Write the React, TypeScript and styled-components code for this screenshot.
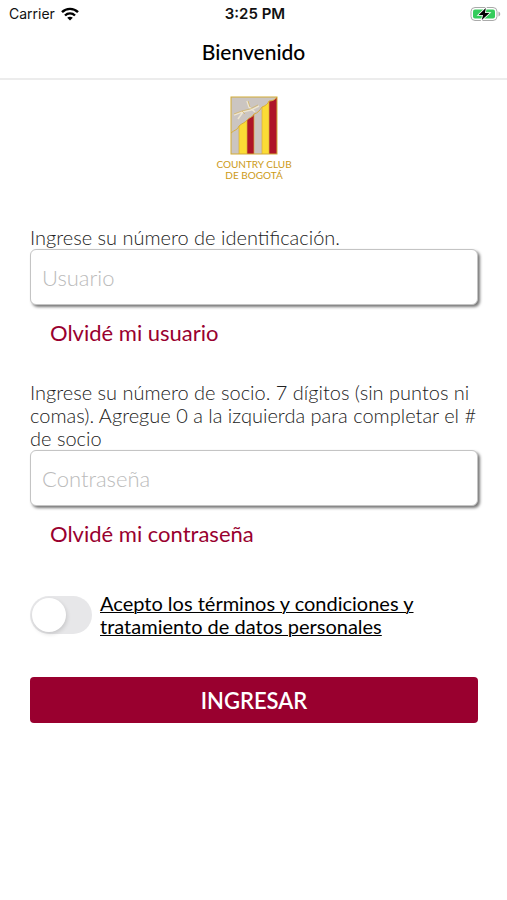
import React, { useState } from "react";
import styled, { createGlobalStyle } from "styled-components";

const GlobalStyle = createGlobalStyle`
  * { box-sizing: border-box; }
  body {
    margin: 0;
    background: #fff;
    color: #000;
    font-family: Lato, "Open Sans", sans-serif;
  }
`;

const Screen = styled.div`
  min-height: 100vh;
  background: #fff;
`;

const StatusBar = styled.div`
  display: grid;
  grid-template-columns: 1fr auto 1fr;
  align-items: center;
  height: 27px;
  padding: 0 6px 0 9px;
  font-family: Inter, "Liberation Sans", sans-serif;
  font-size: 14px;
  line-height: 20px;
  color: #111;
`;

const Carrier = styled.div`
  display: flex;
  align-items: center;
  gap: 6px;
`;

const Clock = styled.div`
  font-size: 15px;
  font-weight: 600;
`;

const BatterySlot = styled.div`
  display: flex;
  justify-content: flex-end;
`;

const Header = styled.header`
  display: flex;
  align-items: center;
  justify-content: center;
  height: 53px;
  padding-bottom: 2px;
  border-bottom: 2px solid #ececec;
`;

const Title = styled.h1`
  margin: 0;
  font-size: 21px;
  line-height: 24px;
  font-weight: 500;
`;

const LogoArea = styled.div`
  display: flex;
  justify-content: center;
  padding: 15px 0 43px;
`;

const Form = styled.form`
  display: flex;
  flex-direction: column;
  padding: 0 29px 0 30px;
`;

const Field = styled.div`
  display: flex;
  flex-direction: column;
  align-items: flex-start;
  margin-bottom: 36px;
`;

const Label = styled.label`
  font-size: 20px;
  line-height: 23px;
  font-weight: 300;
  color: #222;
`;

const TextInput = styled.input`
  width: 100%;
  height: 56px;
  padding: 0 11px;
  border: 1px solid #c4c4c4;
  border-radius: 6px;
  outline: none;
  background: #fff;
  box-shadow: 2px 2px 3px #777;
  font-family: inherit;
  font-size: 22px;
  font-weight: 300;
  color: #222;
  &::placeholder {
    color: #bbb;
    opacity: 1;
  }
`;

const RecoverLink = styled.a`
  margin: 16px 0 0 20px;
  font-size: 22px;
  line-height: 24px;
  color: #99002f;
  text-decoration: none;
`;

const TermsRow = styled.div`
  display: flex;
  align-items: center;
  gap: 8px;
  margin: 10px 0 39px;
`;

const Switch = styled.input`
  appearance: none;
  flex: none;
  display: flex;
  align-items: center;
  width: 62px;
  height: 38px;
  margin: 0;
  padding: 2px;
  border-radius: 19px;
  background: #e7e7e9;
  cursor: pointer;
  &::before {
    content: "";
    width: 34px;
    height: 34px;
    border-radius: 50%;
    background: #fff;
    box-shadow: 1px 2px 4px rgba(0, 0, 0, 0.14);
  }
  &:checked {
    justify-content: flex-end;
    background: #99002f;
  }
`;

const TermsLabel = styled.label`
  max-width: 330px;
  font-size: 20px;
  line-height: 23px;
  text-decoration: underline;
  text-decoration-thickness: 1px;
`;

const SubmitButton = styled.button`
  height: 46px;
  padding: 2px 0 0;
  border: 0;
  border-radius: 4px;
  background: #99002f;
  color: #fff;
  font-family: inherit;
  font-size: 22px;
  line-height: 26px;
  font-weight: 600;
  cursor: pointer;
`;

const WifiIcon = () => (
  <svg width="18" height="14" viewBox="0 0 18 14" fill="none" stroke="#000" strokeWidth="2.4" aria-hidden="true">
    <path d="M1 5.2C5.4 0.7 12.6 0.7 17 5.2" />
    <path d="M4 8.5C6.8 5.7 11.2 5.7 14 8.5" />
    <path d="M9 13.6L6.2 10.8C7.8 9.3 10.2 9.3 11.8 10.8Z" fill="#000" stroke="none" />
  </svg>
);

const BatteryIcon = () => (
  <svg width="31" height="16" viewBox="0 0 31 16" aria-hidden="true">
    <rect x="1" y="1.5" width="26" height="13" rx="4" fill="#fff" stroke="#aaa" />
    <rect x="3" y="3.5" width="22" height="9" rx="2" fill="#35cc5b" />
    <path d="M28.5 5.5C30.8 6.2 30.8 9.8 28.5 10.5Z" fill="#aaa" />
    <path d="M15.8 2L8.6 9H13L11.8 14L19.4 7H15Z" fill="#000" stroke="#fff" strokeWidth="1.6" paintOrder="stroke" />
  </svg>
);

const ClubLogo = () => (
  <svg width="80" height="88" viewBox="0 0 80 88" role="img" aria-label="Country Club de Bogotá">
    <defs>
      <clipPath id="stripes">
        <path d="M17 38C20 35 24 35 25 31C28 28 31 28 33 25C36 22 39 22 40 19C44 18 46 15 48 12C51 11 54 9 55 6C58 6 61 5 63 2V59H17Z" />
      </clipPath>
    </defs>
    <rect x="17" y="2" width="46" height="57" fill="#cbc5c1" />
    <g clipPath="url(#stripes)">
      <path d="M25 0H33V60H25Z M48 0H55V60H48Z" fill="#fbdc35" />
      <path d="M33 0H40V60H33Z M55 0H63V60H55Z" fill="#ae1428" />
      <path d="M25 0V60M33 0V60M40 0V60M48 0V60M55 0V60" stroke="#d8ad3b" strokeWidth="0.7" />
    </g>
    <path
      d="M17 38C20 35 24 35 25 31C28 28 31 28 33 25C36 22 39 22 40 19C44 18 46 15 48 12C51 11 54 9 55 6C58 6 61 5 63 2"
      fill="none"
      stroke="#d8ad3b"
    />
    <path d="M20 20L28 17L37 15L45 11M33 6L35 12L41 17M24 24L29 17" fill="none" stroke="#eee6d2" strokeWidth="1.5" />
    <path d="M20 19L28 16L36 14L44 10M34 6L36 12M28 16L31 19" fill="none" stroke="#d4ac4a" strokeWidth="0.6" />
    <rect x="17" y="2" width="46" height="57" fill="none" stroke="#d2ab36" />
    <g fill="#cc9a16" fontFamily="Lato, sans-serif" fontSize="10" textAnchor="middle">
      <text x="40" y="73">COUNTRY CLUB</text>
      <text x="40" y="84">DE BOGOTÁ</text>
    </g>
  </svg>
);

export default function App() {
  const [accepted, setAccepted] = useState(false);

  return (
    <Screen>
      <GlobalStyle />
      <StatusBar>
        <Carrier>
          Carrier
          <WifiIcon />
        </Carrier>
        <Clock>3:25 PM</Clock>
        <BatterySlot>
          <BatteryIcon />
        </BatterySlot>
      </StatusBar>
      <Header>
        <Title>Bienvenido</Title>
      </Header>
      <main>
        <LogoArea>
          <ClubLogo />
        </LogoArea>
        <Form onSubmit={(event) => event.preventDefault()}>
          <Field>
            <Label htmlFor="user">Ingrese su número de identificación.</Label>
            <TextInput id="user" type="text" placeholder="Usuario" autoComplete="username" />
            <RecoverLink href="#usuario">Olvidé mi usuario</RecoverLink>
          </Field>
          <Field>
            <Label htmlFor="password">
              Ingrese su número de socio. 7 dígitos (sin puntos ni comas). Agregue 0 a la izquierda para completar el # de
              socio
            </Label>
            <TextInput id="password" type="password" placeholder="Contraseña" autoComplete="current-password" />
            <RecoverLink href="#contrasena">Olvidé mi contraseña</RecoverLink>
          </Field>
          <TermsRow>
            <Switch
              id="terms"
              type="checkbox"
              role="switch"
              checked={accepted}
              onChange={(event) => setAccepted(event.target.checked)}
            />
            <TermsLabel htmlFor="terms">Acepto los términos y condiciones y tratamiento de datos personales</TermsLabel>
          </TermsRow>
          <SubmitButton type="submit">INGRESAR</SubmitButton>
        </Form>
      </main>
    </Screen>
  );
}
